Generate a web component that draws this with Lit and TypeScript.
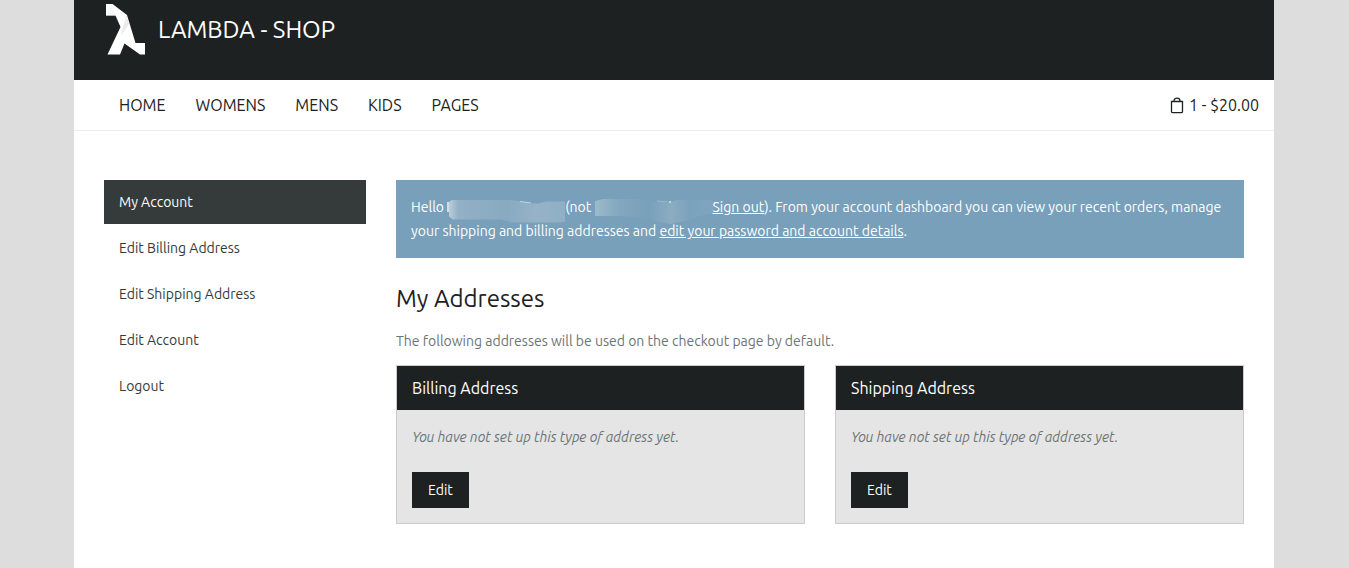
import { LitElement, html, css } from "lit";
import { customElement } from "lit/decorators.js";

const NAV = ["HOME", "WOMENS", "MENS", "KIDS", "PAGES"];
const ACCOUNT_LINKS = ["My Account", "Edit Billing Address", "Edit Shipping Address", "Edit Account", "Logout"];
const ADDRESSES = ["Billing Address", "Shipping Address"];

@customElement("app-root")
export class AppRoot extends LitElement {
  static styles = css`
    :host {
      display: block;
      box-sizing: border-box;
      min-height: 100vh;
      padding-right: 1px;
      background: #ddd;
      color: #1e2122;
      font-family: Ubuntu, "Noto Sans", sans-serif;
      font-size: 14px;
      font-weight: 450;
      line-height: 24px;
    }
    * { box-sizing: border-box; }
    a { color: inherit; text-decoration: none; }
    h1, h2, h3, p, ul { margin: 0; padding: 0; font-weight: inherit; }
    ul { list-style: none; }
    .page {
      max-width: 1200px;
      min-height: 100vh;
      margin: 0 auto;
      background: #fff;
    }
    .header {
      height: 80px;
      padding: 0 30px;
      background: #1e2122;
      color: #fff;
    }
    .brand { display: inline-flex; align-items: center; gap: 12px; height: 60px; font-size: 24px; }
    .logo { display: block; width: 42px; height: 60px; }
    .bar {
      display: flex;
      justify-content: space-between;
      align-items: center;
      border-bottom: 1px solid #eee;
      padding: 0 15px 0 45px;
      font-size: 16px;
      line-height: 50px;
    }
    .menu { display: flex; gap: 30px; }
    .cart { display: flex; align-items: center; gap: 5px; }
    .content {
      display: grid;
      grid-template-columns: minmax(180px, 262px) 1fr;
      gap: 30px;
      align-items: start;
      padding: 49px 30px;
    }
    .account { display: grid; gap: 2px; }
    .link { display: block; padding: 10px 15px; color: #343a3a; }
    .link.active { background: #353a3a; color: #fff; }
    .notice { padding: 15px; background: #78a0ba; color: #fff; }
    .notice a { text-decoration: underline; }
    .title { margin-top: 24px; font-size: 24px; line-height: 34px; }
    .lead { margin-top: 13px; color: #6b7476; }
    .addresses { display: grid; grid-template-columns: 1fr 1fr; gap: 30px; margin-top: 12px; }
    .card { border: 1px solid #ccc; background: #e5e5e5; }
    .card-title { padding: 10px 15px; background: #1e2122; color: #fff; font-size: 16px; line-height: 24px; }
    .card-body { padding: 15px; }
    .empty { margin-bottom: 23px; color: #6b7476; font-style: italic; font-weight: 400; }
    .edit {
      display: block;
      border: 0;
      padding: 6px 16px;
      background: #1e2122;
      color: #fff;
      font: inherit;
    }
    .smudge { width: 118px; height: 24px; vertical-align: top; overflow: visible; }
  `;

  render() {
    return html`
      <div class="page">
        <header class="header">
          <a class="brand" href="#">
            <svg class="logo" viewBox="0 0 42 60" aria-hidden="true">
              <defs>
                <linearGradient id="fold" x1="0" y1="0" x2="1" y2="1">
                  <stop offset="0" stop-color="#fff" />
                  <stop offset="1" stop-color="#d8d8d8" />
                </linearGradient>
              </defs>
              <path fill="#fff" d="M2 4h6.500l14.500 11 8.500 28H41v11.500h-5L20.500 43.500 16 54.500H3.500L16.500 27 11.500 15.500H2z" />
              <path fill="url(#fold)" d="M2 4h5l4.500 11.500H2zM22.500 15l2.500 9-8.500 12 4-14z" opacity=".7" />
            </svg>
            LAMBDA - SHOP
          </a>
        </header>
        <nav class="bar">
          <ul class="menu">${NAV.map((n) => html`<li><a href="#">${n}</a></li>`)}</ul>
          <a class="cart" href="#">
            <svg width="14" height="17" viewBox="0 0 14 17" fill="none" stroke="#1e2122" stroke-width="1.300" aria-hidden="true">
              <path d="M1.500 4.500h11V14.500q0 1.200-1.200 1.200H2.700q-1.200 0-1.200-1.200zM4 4.500V4q0-2.800 3-2.800T10 4v.5" />
            </svg>
            1 - $20.00
          </a>
        </nav>
        <main class="content">
          <ul class="account">
            ${ACCOUNT_LINKS.map((l, i) => html`<li><a class="link ${i === 0 ? "active" : ""}" href="#">${l}</a></li>`)}
          </ul>
          <section>
            <p class="notice">Hello <svg class="smudge" viewBox="0 0 118 24" aria-hidden="true">
                <defs>
                  <linearGradient id="name">
                    <stop offset="0" stop-color="#b9ced9" />
                    <stop offset=".08" stop-color="#92b0c6" />
                    <stop offset=".5" stop-color="#88aac1" />
                    <stop offset=".75" stop-color="#96b3c8" />
                    <stop offset="1" stop-color="#8eafc5" />
                  </linearGradient>
                </defs>
                <path d="M1 7v10" stroke="#fff" stroke-width="1.300" />
                <path fill="url(#name)" d="M2 7l3-2h58l8 1 12 2.500h8l8-2h19v20l-6 1H65l-11-3H6l-4-3z" />
                <path d="M73 6.500l11 1.500" stroke="#c5d6e0" />
              </svg>(not <svg class="smudge" viewBox="0 0 118 24" aria-hidden="true">
                <defs>
                  <linearGradient id="user">
                    <stop offset="0" stop-color="#9dbacb" />
                    <stop offset=".2" stop-color="#83a7bf" />
                    <stop offset=".45" stop-color="#79a0ba" />
                    <stop offset=".65" stop-color="#8cacc2" />
                    <stop offset=".8" stop-color="#7ba2bc" />
                    <stop offset="1" stop-color="#7fa5be" />
                  </linearGradient>
                </defs>
                <path fill="url(#user)" d="M0 6l8-2h40l24 4 10-3h36v13l-10 2-14 5-18 4-12-2-18-5-22-1H0z" />
                <path d="M62 6l11 1" stroke="#9db9cb" />
                <circle cx="75" cy="7" r="1" fill="#dce8ee" />
              </svg><a href="#">Sign out</a>). From your account dashboard you can view your recent orders, manage your shipping and billing addresses and <a href="#">edit your password and account details</a>.</p>
            <h2 class="title">My Addresses</h2>
            <p class="lead">The following addresses will be used on the checkout page by default.</p>
            <div class="addresses">
              ${ADDRESSES.map((a) => html`
                <article class="card">
                  <h3 class="card-title">${a}</h3>
                  <div class="card-body">
                    <p class="empty">You have not set up this type of address yet.</p>
                    <button class="edit" type="button">Edit</button>
                  </div>
                </article>`)}
            </div>
          </section>
        </main>
      </div>
    `;
  }
}
